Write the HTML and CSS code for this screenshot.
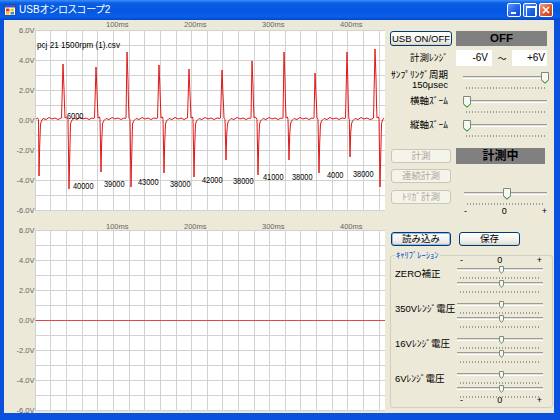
FILE: index.html
```html
<!DOCTYPE html>
<html lang="ja">
<head>
    <meta charset="UTF-8">
    <title>USBオシロスコープ2</title>
    <link rel="stylesheet" href="styles.css">
</head>
<body>

<div class="window">
    <div class="titlebar">
        <svg class="app-icon" width="12" height="12" viewBox="0 0 12 12">
            <rect x="0.5" y="0.5" width="11" height="11" fill="#fff" stroke="#2a4a9a"/>
            <rect x="1" y="1" width="10" height="2.5" fill="#2a5ad8"/>
            <rect x="2" y="4.5" width="3.5" height="3" fill="#e53a2a"/>
            <rect x="6.5" y="4.5" width="3.5" height="3" fill="#f6c61c"/>
            <rect x="2" y="8" width="3.5" height="2.5" fill="#f6c61c"/>
            <rect x="6.5" y="8" width="3.5" height="2.5" fill="#2f8fe0"/>
        </svg>
        <span class="title">USBオシロスコープ2</span>
        <div class="caption-buttons">
            <span class="cap-btn min"></span>
            <span class="cap-btn max"></span>
            <span class="cap-btn close">
                <svg width="12" height="12" viewBox="0 0 12 12"><path d="M3 3l6 6M9 3l-6 6" stroke="#fff" stroke-width="1.6"/></svg>
            </span>
        </div>
    </div>

    <div class="frame">
        <div class="client">

            <!-- waveform views -->
            <div class="scopes">
                <svg class="scope" width="382" height="200" viewBox="4 20 382 200">
                    <rect class="plot-bg" x="35" y="30" width="350" height="181"/>
                    <path class="grid" d="M35.5 30V211M50.5 30V211M66.5 30V211M82.5 30V211M97.5 30V211M113.5 30V211M129.5 30V211M144.5 30V211M160.5 30V211M176.5 30V211M191.5 30V211M207.5 30V211M222.5 30V211M238.5 30V211M254.5 30V211M269.5 30V211M285.5 30V211M300.5 30V211M316.5 30V211M332.5 30V211M347.5 30V211M363.5 30V211M379.5 30V211M35 30.5H385M35 45.5H385M35 60.5H385M35 75.5H385M35 90.5H385M35 105.5H385M35 120.5H385M35 135.5H385M35 150.5H385M35 165.5H385M35 180.5H385M35 195.5H385M35 210.5H385"/>
                    <g class="axis">
                        <text class="yl" x="34.5" y="33">6.0V</text>
                        <text class="yl" x="34.5" y="63">4.0V</text>
                        <text class="yl" x="34.5" y="93">2.0V</text>
                        <text class="yl" x="34.5" y="123">0.0V</text>
                        <text class="yl" x="34.5" y="153">-2.0V</text>
                        <text class="yl" x="34.5" y="183">-4.0V</text>
                        <text class="yl" x="34.5" y="213">-6.0V</text>
                        <text x="106" y="27">100ms</text>
                        <text x="184" y="27">200ms</text>
                        <text x="262" y="27">300ms</text>
                        <text x="340" y="27">400ms</text>
                    </g>
                    <polyline class="trace" points="36,119 37.5,118 38.5,119.5 39,176 39.7,146 40.5,124 41.5,121 43,118.5 46,119.5 49,117.5 52,119 55,118 58,119.5 61,118 61.5,118 63,64 64,89 64.5,105 65,118 66.5,117 68,119.5 69,189 69.7,159 70.5,124 71.5,121 74,118 77,119.5 80,117.5 83,119 86,118 89,119.5 92,118 94,118.5 94.5,118 96,67 97,92 97.5,105 98,118 99.5,117 100,119.5 101,172 101.7,142 102.5,124 103.5,121 106,118.5 109,119.5 112,117.5 115,119 118,118 121,119.5 124,118 125.5,118.5 126,118 127,52 128,80 128.5,104 129,118 130,119.5 131,187 131.7,157 132.5,124 133.5,121 136,118.5 139,119.5 142,117.5 145,119 148,118 151,119.5 154,118 157,118.5 157.5,118 159,65 160,90 160.5,105 161,118 162.5,117 163,119.5 164,173 164.7,143 165.5,124 166.5,121 169,118.5 172,119.5 175,117.5 178,119 181,118 184,119.5 187,118 187.5,118 189,69 190,94 190.5,105 191,118 192.5,117 193,119.5 194,177 194.7,147 195.5,124 196.5,121 199,118.5 202,119.5 205,117.5 208,119 211,118 214,119.5 217,118 220,118.5 220.5,118 222,70 223,95 223.5,105 224,118 225,119.5 226,160 226.7,135 227.5,124 228.5,121 231,118.5 234,119.5 237,117.5 240,119 243,118 246,119.5 249,118 250.5,118.5 251,118 252,61 253,86 253.5,105 254,118 255.5,117 257,119.5 258,175 258.7,145 259.5,124 260.5,121 263,118.5 266,119.5 269,117.5 272,119 275,118 278,119.5 281,118 282.5,118.5 283,118 284,52 285,80 285.5,104 286,118 287.5,117 288,119.5 289,160 289.7,135 290.5,124 291.5,121 294,118.5 297,119.5 300,117.5 303,119 306,118 309,119.5 312,118 313.5,118.5 314,118 315,73 316,96 316.5,105 317,118 318,119.5 319,173 319.7,143 320.5,124 321.5,121 324,118.5 327,119.5 330,117.5 333,119 336,118 339,119.5 342,118 345,118.5 345.5,118 347,52 347.8,80 348.3,104 348.8,118 349.3,119.5 350,157 350.7,133 351.5,124 352.5,121 355,118.5 358,119.5 361,117.5 364,119 367,118 370,119.5 373,118.5 373.5,118 375,49 376,78 376.5,104 377,118 378.5,117 379,119.5 380,187 380.7,157 381.5,124 382.5,120 384,118"/>
                    <text class="note" x="37" y="48" textLength="83" lengthAdjust="spacingAndGlyphs">pcj 21 1500rpm (1).csv</text>
                    <g class="note">
                        <text x="67" y="118.5" textLength="16.5" lengthAdjust="spacingAndGlyphs">6000</text>
                        <text x="73" y="188.5" textLength="20.5" lengthAdjust="spacingAndGlyphs">40000</text>
                        <text x="104" y="186.5" textLength="20.5" lengthAdjust="spacingAndGlyphs">39000</text>
                        <text x="138" y="184.5" textLength="20.5" lengthAdjust="spacingAndGlyphs">43000</text>
                        <text x="170" y="186.5" textLength="20.5" lengthAdjust="spacingAndGlyphs">38000</text>
                        <text x="202" y="182.5" textLength="20.5" lengthAdjust="spacingAndGlyphs">42000</text>
                        <text x="233" y="183.5" textLength="20.5" lengthAdjust="spacingAndGlyphs">38000</text>
                        <text x="263" y="179.5" textLength="20.5" lengthAdjust="spacingAndGlyphs">41000</text>
                        <text x="292" y="179.5" textLength="20.5" lengthAdjust="spacingAndGlyphs">38000</text>
                        <text x="327" y="177.5" textLength="16.5" lengthAdjust="spacingAndGlyphs">4000</text>
                        <text x="353" y="176.5" textLength="20.5" lengthAdjust="spacingAndGlyphs">38000</text>
                    </g>
                </svg>

                <svg class="scope" width="382" height="193" viewBox="4 220 382 193">
                    <rect class="plot-bg" x="35" y="230" width="350" height="181"/>
                    <path class="grid" d="M35.5 230V411M50.5 230V411M66.5 230V411M82.5 230V411M97.5 230V411M113.5 230V411M129.5 230V411M144.5 230V411M160.5 230V411M176.5 230V411M191.5 230V411M207.5 230V411M222.5 230V411M238.5 230V411M254.5 230V411M269.5 230V411M285.5 230V411M300.5 230V411M316.5 230V411M332.5 230V411M347.5 230V411M363.5 230V411M379.5 230V411M35 230.5H385M35 245.5H385M35 260.5H385M35 275.5H385M35 290.5H385M35 305.5H385M35 320.5H385M35 335.5H385M35 350.5H385M35 365.5H385M35 380.5H385M35 395.5H385M35 410.5H385"/>
                    <g class="axis">
                        <text class="yl" x="34.5" y="233">6.0V</text>
                        <text class="yl" x="34.5" y="263">4.0V</text>
                        <text class="yl" x="34.5" y="293">2.0V</text>
                        <text class="yl" x="34.5" y="323">0.0V</text>
                        <text class="yl" x="34.5" y="353">-2.0V</text>
                        <text class="yl" x="34.5" y="383">-4.0V</text>
                        <text class="yl" x="34.5" y="412.5">-6.0V</text>
                        <text x="106" y="229">100ms</text>
                        <text x="184" y="229">200ms</text>
                        <text x="262" y="229">300ms</text>
                        <text x="340" y="229">400ms</text>
                    </g>
                    <path class="flat" d="M35.5 320.5H385"/>
                </svg>
            </div>

            <!-- controls -->
            <div class="panel">
                <div class="row r-usb">
                    <button class="btn usb">USB ON/OFF</button>
                    <div class="status">OFF</div>
                </div>

                <div class="row r-range">
                    <span class="label">計測ﾚﾝｼﾞ</span>
                    <span class="textbox lo">-6V</span>
                    <span class="tilde">～</span>
                    <span class="textbox hi">+6V</span>
                </div>

                <div class="row r-sample">
                    <span class="label two">ｻﾝﾌﾟﾘﾝｸﾞ周期<br>150μsec</span>
                    <div class="trackbar">
                        <div class="groove"></div>
                        <div class="ticks"></div>
                        <svg class="thumb" style="left:79px" width="8" height="12" viewBox="0 0 8 12"><path d="M.5 .5h7V8L4 11.5.5 8z" fill="#f7f7f3" stroke="#7c8c7c"/><path d="M1.2 8.4 4 10.9 6.8 8.4" fill="none" stroke="#3aa63a"/></svg>
                    </div>
                </div>

                <div class="row r-zoom">
                    <span class="label">横軸ｽﾞｰﾑ</span>
                    <div class="trackbar">
                        <div class="groove"></div>
                        <div class="ticks"></div>
                        <svg class="thumb" style="left:1px" width="8" height="12" viewBox="0 0 8 12"><path d="M.5 .5h7V8L4 11.5.5 8z" fill="#f7f7f3" stroke="#7c8c7c"/><path d="M1.2 8.4 4 10.9 6.8 8.4" fill="none" stroke="#3aa63a"/></svg>
                    </div>
                </div>

                <div class="row r-zoom">
                    <span class="label">縦軸ｽﾞｰﾑ</span>
                    <div class="trackbar">
                        <div class="groove"></div>
                        <div class="ticks"></div>
                        <svg class="thumb" style="left:1px" width="8" height="12" viewBox="0 0 8 12"><path d="M.5 .5h7V8L4 11.5.5 8z" fill="#f7f7f3" stroke="#7c8c7c"/><path d="M1.2 8.4 4 10.9 6.8 8.4" fill="none" stroke="#3aa63a"/></svg>
                    </div>
                </div>

                <div class="row r-measure">
                    <button class="btn" disabled>計測</button>
                    <div class="status busy">計測中</div>
                </div>

                <div class="row r-cont">
                    <button class="btn" disabled>連続計測</button>
                </div>

                <div class="row r-trigger">
                    <button class="btn" disabled>ﾄﾘｶﾞ計測</button>
                    <div class="trackbar trig">
                        <div class="groove"></div>
                        <div class="ticks"></div>
                        <svg class="thumb" style="left:40px" width="8" height="12" viewBox="0 0 8 12"><path d="M.5 .5h7V8L4 11.5.5 8z" fill="#f7f7f3" stroke="#7c8c7c"/><path d="M1.2 8.4 4 10.9 6.8 8.4" fill="none" stroke="#3aa63a"/></svg>
                    </div>
                </div>
                <div class="scale trig-scale"><span>-</span><span>0</span><span>+</span></div>

                <div class="row r-file">
                    <button class="btn default">読み込み</button>
                    <button class="btn save">保存</button>
                </div>

                <div class="group">
                    <span class="group-title">ｷｬﾘﾌﾞﾚｰｼｮﾝ</span>
                    <div class="scale cal-scale"><span>-</span><span>0</span><span>+</span></div>

                    <div class="cal-row">
                        <span class="label">ZERO補正</span>
                        <div class="pair">
                            <div class="trackbar mini"><div class="groove"></div><div class="ticks"></div><svg class="thumb" style="left:43px" width="5" height="8" viewBox="0 0 5 8"><path d="M.5 .5h4V5L2.5 7.5.5 5z" fill="#f6f6f2" stroke="#7c8c7c"/></svg></div>
                            <div class="trackbar mini"><div class="groove"></div><div class="ticks"></div><svg class="thumb" style="left:43px" width="5" height="8" viewBox="0 0 5 8"><path d="M.5 .5h4V5L2.5 7.5.5 5z" fill="#f6f6f2" stroke="#7c8c7c"/></svg></div>
                        </div>
                    </div>

                    <div class="cal-row">
                        <span class="label">350Vﾚﾝｼﾞ電圧</span>
                        <div class="pair">
                            <div class="trackbar mini"><div class="groove"></div><div class="ticks"></div><svg class="thumb" style="left:43px" width="5" height="8" viewBox="0 0 5 8"><path d="M.5 .5h4V5L2.5 7.5.5 5z" fill="#f6f6f2" stroke="#7c8c7c"/></svg></div>
                            <div class="trackbar mini"><div class="groove"></div><div class="ticks"></div><svg class="thumb" style="left:43px" width="5" height="8" viewBox="0 0 5 8"><path d="M.5 .5h4V5L2.5 7.5.5 5z" fill="#f6f6f2" stroke="#7c8c7c"/></svg></div>
                        </div>
                    </div>

                    <div class="cal-row">
                        <span class="label">16Vﾚﾝｼﾞ電圧</span>
                        <div class="pair">
                            <div class="trackbar mini"><div class="groove"></div><div class="ticks"></div><svg class="thumb" style="left:43px" width="5" height="8" viewBox="0 0 5 8"><path d="M.5 .5h4V5L2.5 7.5.5 5z" fill="#f6f6f2" stroke="#7c8c7c"/></svg></div>
                            <div class="trackbar mini"><div class="groove"></div><div class="ticks"></div><svg class="thumb" style="left:43px" width="5" height="8" viewBox="0 0 5 8"><path d="M.5 .5h4V5L2.5 7.5.5 5z" fill="#f6f6f2" stroke="#7c8c7c"/></svg></div>
                        </div>
                    </div>

                    <div class="cal-row">
                        <span class="label">6Vﾚﾝｼﾞ電圧</span>
                        <div class="pair">
                            <div class="trackbar mini"><div class="groove"></div><div class="ticks"></div><svg class="thumb" style="left:43px" width="5" height="8" viewBox="0 0 5 8"><path d="M.5 .5h4V5L2.5 7.5.5 5z" fill="#f6f6f2" stroke="#7c8c7c"/></svg></div>
                            <div class="trackbar mini"><div class="groove"></div><div class="ticks"></div><svg class="thumb" style="left:43px" width="5" height="8" viewBox="0 0 5 8"><path d="M.5 .5h4V5L2.5 7.5.5 5z" fill="#f6f6f2" stroke="#7c8c7c"/></svg></div>
                        </div>
                    </div>

                    <div class="scale cal-scale foot"><span>-</span><span>0</span><span>+</span></div>
                </div>
            </div>

        </div>
    </div>
</div>

</body>
</html>
```

FILE: styles.css
```css
* {
    box-sizing: border-box;
}

body {
    margin: 0;
    background: #fff;
    font-family: "Liberation Sans Narrow", "Liberation Sans", "Noto Sans CJK JP", sans-serif;
}

/* XP style window frame */
.window {
    width: 560px;
    height: 420px;
    display: flex;
    flex-direction: column;
    background: #0a52de;
}

.titlebar {
    height: 20px;
    display: flex;
    align-items: center;
    padding: 0 7px 0 4px;
    background: linear-gradient(#3d8ef9 0, #0a5fe6 3px, #0557e0 50%, #0a5ee8 85%, #0046c8 100%);
    color: #fff;
}

.app-icon {
    margin-right: 3px;
}

.title {
    flex: 1;
    font-family: "Liberation Sans", "Noto Sans CJK JP", sans-serif;
    font-size: 10px;
    line-height: 12px;
    font-feature-settings: "palt";
}

.caption-buttons {
    display: flex;
    gap: 2px;
}

.cap-btn {
    width: 14px;
    height: 14px;
    border: 1px solid #fff;
    border-radius: 2px;
    background: linear-gradient(135deg, #5b97ff, #2263e8 55%, #0d4ccc);
    position: relative;
}

.cap-btn.min::after {
    content: "";
    position: absolute;
    left: 3px;
    bottom: 2px;
    width: 5px;
    height: 2px;
    background: #fff;
}

.cap-btn.max::after {
    content: "";
    position: absolute;
    left: 2px;
    top: 2px;
    width: 8px;
    height: 8px;
    border: 1px solid #fff;
    border-top-width: 2px;
}

.cap-btn.close {
    background: linear-gradient(135deg, #f39a7c, #e25a34 55%, #c43c1c);
}

.cap-btn.close svg {
    display: block;
}

.frame {
    flex: 1;
    display: flex;
    padding: 0 6px 7px 4px;
}

.client {
    flex: 1;
    display: flex;
    background: #ece9d8;
}

/* scope views */
.scopes {
    width: 382px;
    display: flex;
    flex-direction: column;
}

.scope {
    display: block;
}

.plot-bg {
    fill: #fff;
}

.grid {
    fill: none;
    stroke: #d2d2d2;
    stroke-width: 1;
    shape-rendering: crispEdges;
}

.axis text {
    font-family: "Liberation Sans", sans-serif;
    font-size: 7.5px;
    fill: #666;
}

.axis .yl {
    text-anchor: end;
}

.trace {
    fill: none;
    stroke: #e01818;
    stroke-width: 1;
    stroke-linejoin: round;
}

.flat {
    stroke: #e04848;
    stroke-width: 1.2;
}

.note,
.note text {
    font-family: "Liberation Sans", sans-serif;
    font-size: 9px;
    fill: #000;
}

/* control panel */
.panel {
    width: 168px;
    padding: 11px 0 0 4px;
    display: flex;
    flex-direction: column;
    font-size: 9.5px;
    color: #000;
}

.row {
    display: flex;
    align-items: center;
}

.label {
    width: 58px;
    text-align: right;
    line-height: 12px;
    white-space: nowrap;
}

.btn {
    font: inherit;
    width: 60px;
    height: 14px;
    padding: 0;
    line-height: 12px;
    color: #000;
    border: 1px solid #003c74;
    border-radius: 3px;
    background: linear-gradient(#ffffff, #f2f1ec 60%, #e3e0d6 90%, #d2ccc0);
}

.btn:disabled {
    color: #aca899;
    border-color: #c9c7ba;
    background: #f5f4ea;
}

.btn.default {
    box-shadow: inset 0 0 0 1px #9ab8ec;
}

.status {
    background: #808080;
    color: #000;
    font-weight: bold;
    text-align: center;
}

.r-usb {
    height: 15px;
}

.r-usb .btn {
    width: 62px;
    height: 15px;
}

.r-usb .status {
    margin-left: 4px;
    width: 91px;
    height: 15px;
    line-height: 15px;
    font-family: "Liberation Sans", sans-serif;
    font-size: 11.5px;
}

.r-range {
    margin-top: 4px;
    height: 16px;
}

.textbox {
    background: #fff;
    height: 16px;
    line-height: 16px;
    text-align: right;
    font-size: 10px;
}

.textbox.lo {
    margin-left: 8px;
    width: 36px;
    padding-right: 4px;
}

.textbox.hi {
    width: 35px;
    padding-right: 2px;
}

.tilde {
    width: 20px;
    text-align: center;
    font-size: 9px;
}

.r-sample {
    margin-top: 3px;
    height: 20px;
    align-items: flex-start;
}

.label.two {
    line-height: 10px;
    padding-top: 1px;
}

.r-zoom {
    margin-top: 4px;
    height: 20px;
    align-items: flex-start;
}

.r-zoom .label {
    padding-top: 2px;
}

/* trackbar */
.trackbar {
    position: relative;
    width: 86px;
    height: 20px;
    margin-left: 14px;
}

.groove {
    position: absolute;
    left: 1px;
    right: 1px;
    top: 7px;
    height: 3px;
    border-top: 1px solid #9c9c96;
    border-bottom: 1px solid #fff;
    background: #e4e2d8;
}

.ticks {
    position: absolute;
    left: 4px;
    right: 3px;
    top: 18px;
    height: 2px;
    background: repeating-linear-gradient(90deg, #a09f98 0 1px, transparent 1px 3px);
}

.thumb {
    position: absolute;
    top: 3px;
}

.r-measure {
    margin-top: 11px;
    height: 16px;
}

.r-measure .btn,
.r-cont .btn,
.r-trigger .btn,
.r-file .default {
    margin-left: 1px;
}

.status.busy {
    margin-left: 5px;
    width: 89px;
    height: 16px;
    line-height: 16px;
    font-size: 12px;
}

.r-cont {
    margin-top: 5px;
    height: 14px;
}

.r-trigger {
    margin-top: 2px;
    height: 20px;
    align-items: flex-start;
}

.r-trigger .btn {
    margin-top: 5px;
}

.trackbar.trig {
    width: 85px;
    margin-left: 12px;
}

.scale {
    display: flex;
    justify-content: space-between;
    height: 9px;
    line-height: 9px;
    font-family: "Liberation Sans", sans-serif;
    font-size: 9px;
}

.trig-scale {
    margin: 2px 0 0 73px;
    width: 85px;
    padding: 0 1px 0 1px;
}

.r-file {
    margin-top: 16px;
    height: 14px;
}

.r-file .save {
    margin-left: 8px;
    width: 61px;
}

/* calibration group */
.group {
    position: relative;
    margin-top: 9px;
    width: 163px;
    height: 153px;
    border: 1px solid #d0d0bf;
    border-radius: 3px;
    padding: 0 0 0 4px;
}

.group-title {
    position: absolute;
    left: 4px;
    top: -6px;
    padding: 0 1px;
    background: #ece9d8;
    color: #0046d5;
    font-size: 8.5px;
    line-height: 10px;
}

.cal-scale {
    margin-left: 61px;
    width: 88px;
    height: 8px;
    line-height: 8px;
    padding: 0 2px 0 4px;
}

.cal-row {
    display: flex;
    height: 28px;
    margin-top: 7px;
}

.cal-scale + .cal-row {
    margin-top: 2px;
}

.cal-row .label {
    width: 61px;
    text-align: left;
    padding-top: 2px;
}

.pair {
    display: flex;
    flex-direction: column;
}

.trackbar.mini {
    width: 88px;
    height: 14px;
    margin-left: 0;
}

.trackbar.mini .groove {
    top: 2px;
}

.trackbar.mini .ticks {
    top: 11px;
}

.trackbar.mini .thumb {
    top: 0;
}

.cal-scale.foot {
    margin-top: -3px;
}
```
